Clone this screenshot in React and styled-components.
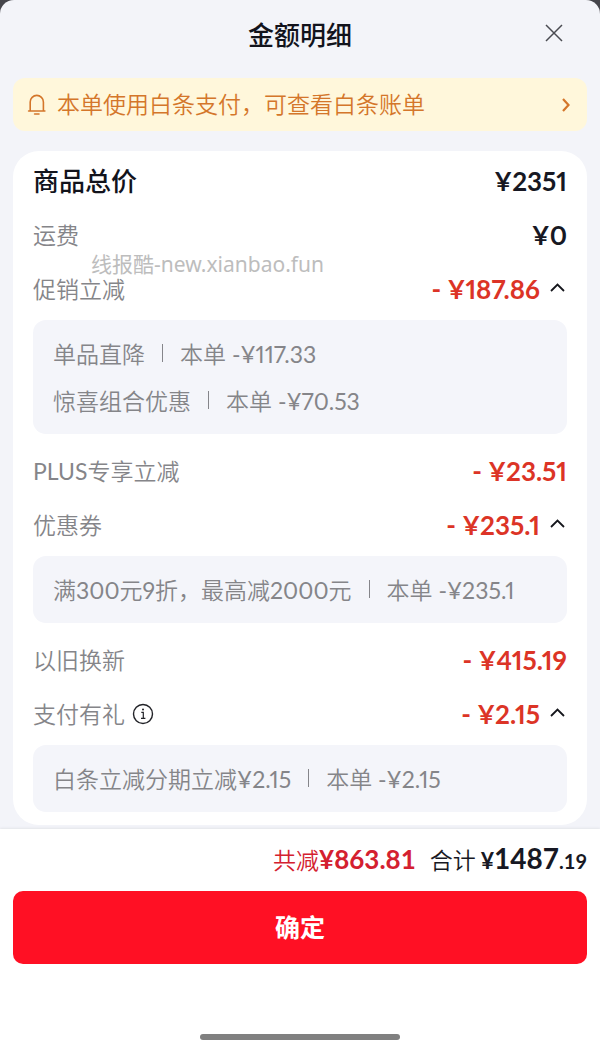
import React, { useState } from "react";
import styled, { createGlobalStyle } from "styled-components";

const GlobalStyle = createGlobalStyle`
  *, *::before, *::after { box-sizing: border-box; }
  body {
    margin: 0;
    background: #45454b;
    font-family: Lato, "Noto Sans CJK SC", sans-serif;
    font-size: 23px;
    font-weight: 350;
    font-variant-numeric: proportional-nums;
    color: #858589;
  }
  button { font: inherit; font-variant-numeric: inherit; border: 0; padding: 0; background: none; cursor: pointer; }
`;

const Sheet = styled.main`
  min-height: 100vh;
  display: flex;
  flex-direction: column;
  background: #f3f4f9;
  border-radius: 14px 14px 0 0;
  overflow: hidden;
`;

const Header = styled.header`
  display: grid;
  grid-template-columns: 40px 1fr 40px;
  align-items: center;
  height: 66px;
  padding: 0 26px;
`;

const Title = styled.h1`
  grid-column: 2;
  margin: 0;
  text-align: center;
  font-size: 26px;
  font-weight: 500;
  color: #12131c;
`;

const CloseButton = styled.button`
  justify-self: end;
  display: grid;
  place-items: center;
  width: 40px;
  height: 40px;
  color: #4a4b52;
`;

const Notice = styled.a`
  display: flex;
  align-items: center;
  gap: 10px;
  height: 53px;
  margin: 12px 13px 20px;
  padding: 0 14px;
  border-radius: 12px;
  background: #fff7db;
  color: #d4762a;
  text-decoration: none;
`;

const NoticeText = styled.span`
  flex: 1;
  padding-bottom: 3px;
`;

const Card = styled.section`
  position: relative;
  margin: 0 13px 4px;
  padding: 3px 20px;
  border-radius: 26px;
  background: #fff;
`;

const Row = styled.div`
  display: flex;
  align-items: center;
  justify-content: space-between;
  height: 54px;
`;

const Label = styled.span`
  display: flex;
  align-items: center;
  gap: 6px;
  padding-bottom: 3px;
  font-size: ${(p) => (p.$strong ? "26px" : "23px")};
  font-weight: ${(p) => (p.$strong ? 500 : 350)};
  color: ${(p) => (p.$strong ? "#12131c" : "#858589")};
`;

const Latin = styled.span`
  font-weight: 400;
`;

const Amount = styled.span`
  font-size: 26px;
  font-weight: 700;
  color: ${(p) => (p.$off ? "#dc3426" : "#171823")};
`;

const Toggle = styled.button`
  display: flex;
  align-items: center;
  gap: 8px;
  color: #15161c;

  svg { transform: ${(p) => (p.$open ? "none" : "rotate(180deg)")}; }
`;

const InfoButton = styled.button`
  display: grid;
  color: #222328;
`;

const DetailBox = styled.ul`
  list-style: none;
  margin: 4px 0 10px;
  padding: 10px 20px;
  border-radius: 13px;
  background: #f4f5fa;
`;

const DetailLine = styled.li`
  display: flex;
  align-items: center;
  height: 47px;
  padding-bottom: 2px;
`;

const Divider = styled.span`
  width: 1px;
  height: 18px;
  margin: 0 17px;
  background: #85858a;
`;

const Watermark = styled.span`
  position: absolute;
  left: 78px;
  top: 99px;
  font-family: "Noto Sans", "Noto Sans CJK SC", sans-serif;
  font-size: 21px;
  font-weight: 400;
  line-height: 28px;
  color: #bdbdbd;
  pointer-events: none;
`;

const Footer = styled.footer`
  flex: 1;
  display: flex;
  flex-direction: column;
  padding: 0 13px 12px;
  background: #fff;
  box-shadow: 0 -1px 2px #e4e5ea;
`;

const Summary = styled.div`
  display: flex;
  align-items: center;
  justify-content: flex-end;
  gap: 14px;
  height: 62px;
  padding-bottom: 3px;
  font-variant-numeric: tabular-nums;
`;

const Saved = styled.span`
  display: flex;
  align-items: baseline;
  color: #d4202f;

  b { font-size: 26px; font-weight: 700; }
`;

const Total = styled.span`
  display: flex;
  align-items: baseline;
  color: #171823;

  b { font-size: 28px; font-weight: 700; }
`;

const TotalSmall = styled.span`
  margin-left: ${(p) => (p.$spaced ? "5px" : "0")};
  font-size: ${(p) => (p.$spaced ? "23px" : "20px")};
  font-weight: 700;
`;

const ConfirmButton = styled.button`
  height: 73px;
  border-radius: 10px;
  color: #fff;

  && {
    padding-bottom: 3px;
    font-size: 25px;
    font-weight: 700;
    background: #ff1024;
  }
`;

const HomeBar = styled.div`
  align-self: center;
  width: 200px;
  height: 6px;
  margin-top: auto;
  border-radius: 3px;
  background: #808080;
`;

const CloseIcon = () => (
  <svg width="18" height="18" viewBox="0 0 18 18" fill="none" stroke="currentColor" strokeWidth="1.5" aria-hidden="true">
    <path d="M1 1l16 16M17 1L1 17" />
  </svg>
);

const BellIcon = () => (
  <svg width="20" height="22" viewBox="0 0 20 22" fill="none" stroke="currentColor" strokeWidth="1.6" strokeLinecap="round" strokeLinejoin="round" aria-hidden="true">
    <path d="M1.600 17h16.300M3.200 16.800V8a6.600 6.600 0 0 1 13.200 0v8.800M7.600 20h4.400" />
  </svg>
);

const ChevronRight = () => (
  <svg width="14" height="16" viewBox="0 0 14 16" fill="none" stroke="currentColor" strokeWidth="2.2" aria-hidden="true">
    <path d="M4 2l5.500 6-5.500 6" />
  </svg>
);

const ChevronUp = () => (
  <svg width="19" height="16" viewBox="0 0 19 16" fill="none" stroke="currentColor" strokeWidth="1.8" aria-hidden="true">
    <path d="M3 10l6.500-6.500L16 10" />
  </svg>
);

const InfoIcon = () => (
  <svg width="24" height="24" viewBox="0 0 24 24" fill="none" stroke="currentColor" strokeWidth="1.4" aria-hidden="true">
    <circle cx="12" cy="13" r="9.500" />
    <path d="M10.300 11.300h2v6M10 17.300h4.400" strokeWidth="1.200" />
    <circle cx="12" cy="8.600" r="1" fill="currentColor" stroke="none" />
  </svg>
);

const items = [
  { label: "商品总价", amount: "¥2351", strong: true },
  { label: "运费", amount: "¥0" },
  {
    label: "促销立减",
    amount: "- ¥187.86",
    off: true,
    details: [
      ["单品直降", "本单 -¥117.33"],
      ["惊喜组合优惠", "本单 -¥70.53"],
    ],
  },
  { label: "PLUS专享立减", amount: "- ¥23.51", off: true },
  {
    label: "优惠券",
    amount: "- ¥235.1",
    off: true,
    details: [["满300元9折，最高减2000元", "本单 -¥235.1"]],
  },
  { label: "以旧换新", amount: "- ¥415.19", off: true },
  {
    label: "支付有礼",
    amount: "- ¥2.15",
    off: true,
    info: true,
    details: [["白条立减分期立减¥2.15", "本单 -¥2.15"]],
  },
];

// Sets Latin letters and figures one weight heavier than the Chinese text around them.
function MixedText({ children }) {
  const parts = children.split(/([ -~¥]+)/);
  return <span>{parts.map((part, i) => (i % 2 ? <Latin key={i}>{part}</Latin> : part))}</span>;
}

function PriceItem({ item }) {
  const [open, setOpen] = useState(true);
  const amount = <Amount $off={item.off}>{item.amount}</Amount>;
  return (
    <>
      <Row>
        <Label $strong={item.strong}>
          <MixedText>{item.label}</MixedText>
          {item.info && (
            <InfoButton type="button" aria-label="说明">
              <InfoIcon />
            </InfoButton>
          )}
        </Label>
        {item.details ? (
          <Toggle type="button" $open={open} aria-expanded={open} onClick={() => setOpen(!open)}>
            {amount}
            <ChevronUp />
          </Toggle>
        ) : (
          amount
        )}
      </Row>
      {item.details && open && (
        <DetailBox>
          {item.details.map(([name, value]) => (
            <DetailLine key={name}>
              <MixedText>{name}</MixedText>
              <Divider />
              <MixedText>{value}</MixedText>
            </DetailLine>
          ))}
        </DetailBox>
      )}
    </>
  );
}

export default function App() {
  return (
    <>
      <GlobalStyle />
      <Sheet>
        <Header>
          <Title>金额明细</Title>
          <CloseButton type="button" aria-label="关闭">
            <CloseIcon />
          </CloseButton>
        </Header>
        <Notice href="#bill">
          <BellIcon />
          <NoticeText>本单使用白条支付，可查看白条账单</NoticeText>
          <ChevronRight />
        </Notice>
        <Card>
          {items.map((item) => (
            <PriceItem key={item.label} item={item} />
          ))}
          <Watermark>线报酷-new.xianbao.fun</Watermark>
        </Card>
        <Footer>
          <Summary>
            <Saved>
              共减<b>¥863.81</b>
            </Saved>
            <Total>
              合计
              <TotalSmall $spaced>¥</TotalSmall>
              <b>1487</b>
              <TotalSmall>.19</TotalSmall>
            </Total>
          </Summary>
          <ConfirmButton type="button">确定</ConfirmButton>
          <HomeBar />
        </Footer>
      </Sheet>
    </>
  );
}
